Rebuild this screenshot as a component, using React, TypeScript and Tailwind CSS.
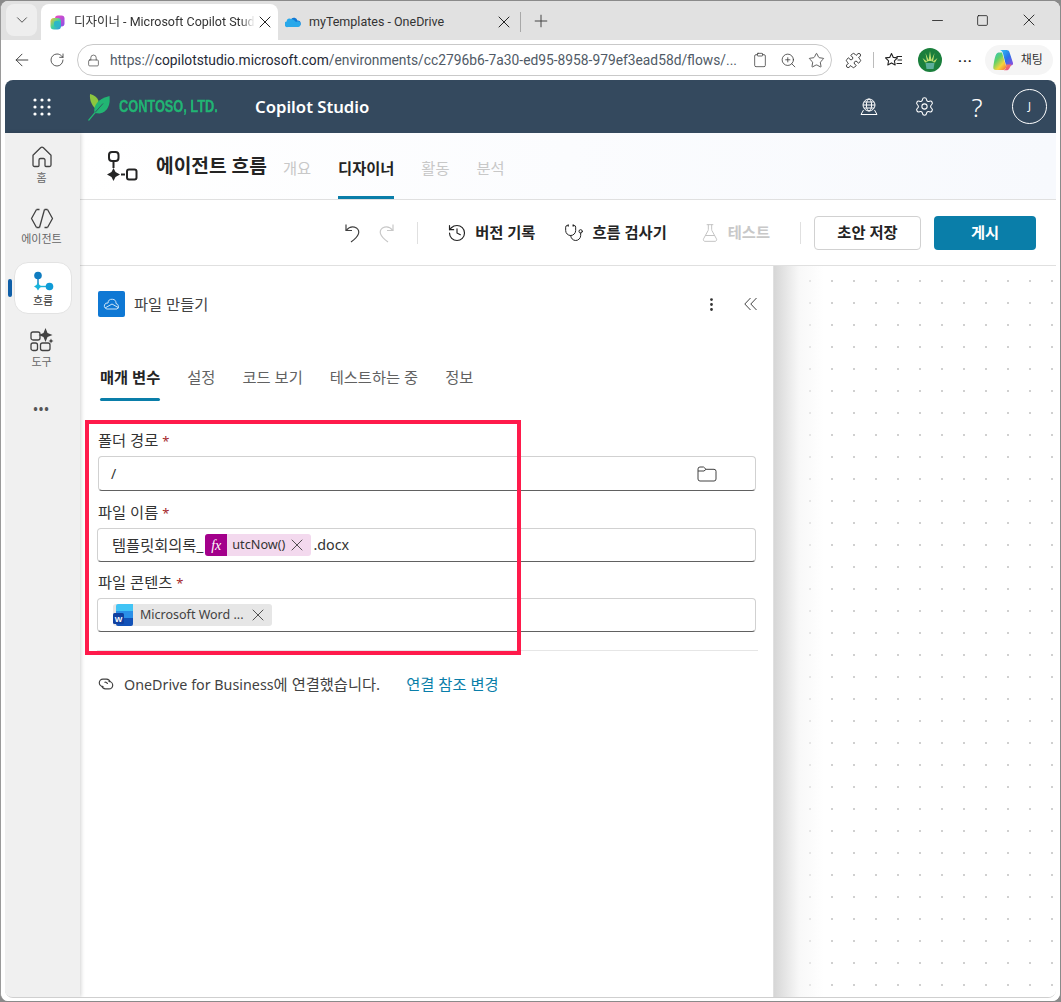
import { ArrowLeft, Clipboard, FlaskConical, History, Lock, MoreVertical, Puzzle, RotateCw, Settings, Star, Stethoscope, X, ZoomIn, ChevronDown, Minus, Plus, Square } from 'lucide-react';

const FONT = 'font-["Noto_Sans","Noto_Sans_CJK_KR",sans-serif]';
const CHROME_FONT = 'font-["Roboto","Noto_Sans_CJK_KR",sans-serif]';

// ---- small drawn icons ----

function CopilotStudioFavicon() {
  return (
    <svg width="15" height="15" viewBox="0 0 15 15">
      <defs>
        <linearGradient id="fvA" x1="0" y1="0" x2="1" y2="1">
          <stop offset="0" stopColor="#f04bc0" />
          <stop offset="1" stopColor="#8a50e8" />
        </linearGradient>
        <linearGradient id="fvB" x1="0" y1="0" x2="1" y2="1">
          <stop offset="0" stopColor="#f5c23a" />
          <stop offset="0.5" stopColor="#3fd2a0" />
          <stop offset="1" stopColor="#2f8fe8" />
        </linearGradient>
      </defs>
      <rect x="5" y="0.5" width="9.500" height="11" rx="3" fill="url(#fvA)" />
      <rect x="0.500" y="3" width="10.500" height="11.500" rx="3.500" fill="url(#fvB)" />
      <rect x="4" y="6" width="6" height="6" rx="2" fill="#2cb6c8" />
    </svg>
  );
}

function OneDriveIcon() {
  return (
    <svg width="16" height="12" viewBox="0 0 16 11">
      <path d="M6.2 2.4A3.6 3.6 0 0 1 12.4 4 3 3 0 0 1 13 10H4z" fill="#0f78d4" />
      <path d="M6.2 2.4A3 3 0 0 0 1.6 5 2.7 2.7 0 0 0 3 10.5h10a2.6 2.6 0 0 0 2.6-2.4C15.8 5.200 13 3.800 11 5.400 9.500 3.300 7.500 2.400 6.200 2.400z" fill="#28a8ea" />
    </svg>
  );
}

function Waffle() {
  return (
    <svg width="18" height="18" viewBox="0 0 18 18" fill="#fff">
      {[2, 9, 16].map((y) => [2, 9, 16].map((x) => <circle key={`${x}-${y}`} cx={x} cy={y} r="1.6" />))}
    </svg>
  );
}

function LeafLogo() {
  return (
    <svg width="23" height="28" viewBox="0 0 23 28">
      <path d="M8 16C3 12 1.500 6 2 1c4 1 7.500 3.500 8.500 7z" fill="#8cc63f" />
      <path d="M6.500 20C5 12 10 6 21.500 3c1 8-1.500 16-10 17.500z" fill="#22b573" />
      <path d="M0.500 27.500C5 22 10 16 15 10.500" stroke="#22b573" strokeWidth="1.200" fill="none" />
      <path d="M7 19.500 15 10.500" stroke="#34495e" strokeWidth="0.800" fill="none" />
    </svg>
  );
}

function CopilotIcon() {
  return (
    <svg width="22" height="22" viewBox="0 0 22 22">
      <defs>
        <linearGradient id="cpA" x1="0" y1="0" x2="1" y2="1">
          <stop offset="0" stopColor="#2fc6f0" />
          <stop offset="0.55" stopColor="#2a6fe8" />
          <stop offset="1" stopColor="#9a4be0" />
        </linearGradient>
        <linearGradient id="cpB" x1="0" y1="0" x2="0.800" y2="1">
          <stop offset="0" stopColor="#2fc4c8" />
          <stop offset="0.4" stopColor="#5fd06a" />
          <stop offset="0.75" stopColor="#f6d53a" />
          <stop offset="1" stopColor="#f6893a" />
        </linearGradient>
        <linearGradient id="cpC" x1="0" y1="0" x2="1" y2="1">
          <stop offset="0" stopColor="#f5875a" />
          <stop offset="1" stopColor="#e8458f" />
        </linearGradient>
      </defs>
      <path d="M8 1h6.500c1.500 0 2.500.8 3 2.300L21 14c.4 1.500-.7 2.500-2 2.500h-5L11 4.500C10.500 2.500 9.500 1.500 8 1z" fill="url(#cpA)" />
      <path d="M6.500 3.500h3.500L14 17c.5 2.300-1 4-3 4H4c-2 0-3-1.200-2.700-3C2 13 3 3.500 6.500 3.500z" fill="url(#cpB)" />
      <path d="M14 15.500h5.500L17 20c-.5 1-1.500 1.300-2.500 1.300H11c2.500 0 3.600-2.800 3-5.800z" fill="url(#cpC)" />
    </svg>
  );
}

function FlowIcon({ accent }: { accent?: boolean }) {
  if (accent) {
    return (
      <svg width="22" height="22" viewBox="0 0 22 22">
        <circle cx="6" cy="4.500" r="3.800" fill="#0f7cc0" />
        <path d="M6 8v6" stroke="#0f7cc0" strokeWidth="1.400" />
        <path d="M6 11.500l1.600 2.400 2.400 1.600-2.400 1.600L6 19.500l-1.600-2.400L2 15.500l2.400-1.600z" fill="#18b4dc" />
        <path d="M9 15.500h5" stroke="#18b4dc" strokeWidth="1.400" />
        <circle cx="17.500" cy="15.500" r="3.800" fill="#0f9bd7" />
      </svg>
    );
  }
  return (
    <svg width="32" height="31" viewBox="0 0 32 31" fill="none" stroke="#242424" strokeWidth="2">
      <rect x="3" y="1" width="9.500" height="9" rx="3" />
      <path d="M7.500 10v7" />
      <path d="M7.500 17l2 4 4.500 2.500-4.500 2.500-2 4-2-4L1 23.500 5.500 21z" fill="#242424" stroke="none" />
      <path d="M15 23.500h4" />
      <rect x="21" y="18.500" width="9.500" height="10" rx="2" />
    </svg>
  );
}

function HomeIcon() {
  return (
    <svg width="22" height="22" viewBox="0 0 22 22" fill="none" stroke="#424242" strokeWidth="1.300" strokeLinejoin="round">
      <path d="M2 9.200 9.600 1.800a2 2 0 0 1 2.800 0L20 9.200V19a1.500 1.500 0 0 1-1.500 1.500H15a1 1 0 0 1-1-1v-5.500a1.500 1.500 0 0 0-1.500-1.500h-3A1.500 1.500 0 0 0 8 14v5.500a1 1 0 0 1-1 1H3.500A1.500 1.500 0 0 1 2 19z" />
    </svg>
  );
}

function AgentIcon() {
  return (
    <svg width="24" height="21" viewBox="0 0 24 21" fill="none" stroke="#424242" strokeWidth="1.300" strokeLinejoin="round">
      <path d="M6.500 1.500 1.500 10.500l5 9" />
      <path d="M17.500 1.500l5 9-5 9" />
      <path d="M6.500 1.500h3M14.500 1.500h3M6.500 19.500h3M14.500 19.500h3" />
      <path d="M14.500 1.500 9.500 19.500" />
    </svg>
  );
}

function ToolsIcon() {
  return (
    <svg width="24" height="24" viewBox="0 0 24 24" fill="none" stroke="#424242" strokeWidth="1.300">
      <rect x="1" y="4" width="9" height="8" rx="2" />
      <rect x="1" y="15" width="6.500" height="7.500" rx="2" />
      <rect x="10.500" y="15" width="9.500" height="7.500" rx="2" />
      <path d="M15.500 0l2 5 5 2-5 2-2 5-2-5-5-2 5-2z" fill="#424242" stroke="none" />
      <path d="M21 10.500l.8 1.700 1.700.8-1.700.8-.8 1.700-.8-1.700-1.700-.8 1.700-.8z" fill="#424242" stroke="none" />
    </svg>
  );
}

function GlobeDesk() {
  return (
    <svg width="18" height="18" viewBox="0 0 18 18" fill="none" stroke="#fff" strokeWidth="1">
      <circle cx="9" cy="7" r="6" />
      <ellipse cx="9" cy="7" rx="2.600" ry="6" />
      <path d="M3 7h12M4 4h10M4 10h10" />
      <path d="M3.500 12 1 16.500h16L14.500 12" />
    </svg>
  );
}

function UndoIcon({ flip, color }: { flip?: boolean; color: string }) {
  return (
    <svg width="18" height="20" viewBox="0 0 18 20" fill="none" stroke={color} strokeWidth="1.200" className={flip ? '-scale-x-100' : ''}>
      <path d="M2 1.500v6h6" />
      <path d="M2 7.500 C5 4 9 3 12.500 5 c4 3 3 8-5.500 14" />
    </svg>
  );
}

function FavoritesIcon() {
  return (
    <svg width="18" height="16" viewBox="0 0 18 16" fill="none" stroke="#222" strokeWidth="1.100" strokeLinejoin="round">
      <path d="M6.500 1.500 8.300 5.400l4.200.5-3.100 2.900.8 4.200-3.700-2.100L2.800 13l.8-4.200L.5 5.900l4.200-.5z" />
      <path d="M11.500 4.500H17M12.500 8H17M11.500 11.500H17" />
    </svg>
  );
}

function FolderIcon() {
  return (
    <svg width="20" height="16" viewBox="0 0 20 16" fill="none" stroke="#424242" strokeWidth="1">
      <path d="M1 3a2 2 0 0 1 2-2h3.500L9 3.300h8a2 2 0 0 1 2 2V13a2 2 0 0 1-2 2H3a2 2 0 0 1-2-2z" />
      <path d="M1 5h6l2-1.700" />
    </svg>
  );
}

function ChevronsIcon() {
  return (
    <svg width="14" height="14" viewBox="0 0 14 14" fill="none" stroke="#424242" strokeWidth="1">
      <path d="M6.500 1 .8 7l5.700 6" />
      <path d="M12.500 1 6.800 7l5.700 6" />
    </svg>
  );
}

function OneDriveTile() {
  return (
    <div className="flex h-[26px] w-[27px] items-center justify-center rounded-[2px] bg-[#0f78d4]">
      <svg width="18" height="12" viewBox="0 0 18 12" fill="none" stroke="#cfe6f8" strokeWidth="1">
        <path d="M5 5a4 4 0 0 1 8 .5 3 3 0 0 1 1 5.500H4a3 3 0 0 1-2.500-4A3 3 0 0 1 5 5z" />
        <path d="M2 10 9 6l7 4" />
      </svg>
    </div>
  );
}

function WordIcon() {
  return (
    <svg width="20" height="22" viewBox="0 0 20 22">
      <path d="M3 2a2 2 0 0 1 2-2h15v7H3z" fill="#41c4f5" />
      <path d="M3 7h17v7H3z" fill="#2a8fe8" />
      <path d="M3 14h17v6a2 2 0 0 1-2 2H5a2 2 0 0 1-2-2z" fill="#1252b8" />
      <rect x="0" y="9" width="11" height="11" rx="1.500" fill="#1040a0" />
      <text x="5.500" y="17.500" fontSize="8" fontWeight="700" textAnchor="middle" fill="#fff" fontFamily="Liberation Sans">W</text>
    </svg>
  );
}

function LinkIcon() {
  return (
    <svg width="16" height="14" viewBox="0 0 16 14" fill="none" stroke="#424242" strokeWidth="1.200">
      <path d="M5.500 9.500H5a3.700 3.700 0 0 1 0-7.400h3.500a3.700 3.700 0 0 1 3.600 3" />
      <path d="M10.500 4.500h.5a3.700 3.700 0 0 1 0 7.400H7.500a3.700 3.700 0 0 1-3.600-3" />
      <path d="M6.500 5.500a2 2 0 0 1 3 1.500" />
    </svg>
  );
}

function ProfileAvatar() {
  return (
    <div className="flex h-[24px] w-[24px] items-center justify-center rounded-full bg-[#1a7f3c]">
      <svg width="18" height="20" viewBox="0 0 18 20">
        <path d="M9 1l1.500 10h-3zM4.500 3l3.500 8-2 .5zM13.500 3l-3.500 8 2 .5zM1.500 8l5 4-2.500.5zM16.500 8l-5 4 2.500.5z" fill="#bfe070" />
        <path d="M4.500 13h9l-1 6h-7z" fill="#5cae9a" />
      </svg>
    </div>
  );
}

// ---- browser chrome ----

function TabStrip() {
  return (
    <div className={`flex h-[39px] shrink-0 items-end bg-[#e1e1e1] pl-[5px] ${CHROME_FONT}`}>
      <div className="mb-[4px] flex h-[32px] w-[31px] items-center justify-center rounded-lg bg-[#eeeeee]">
        <ChevronDown size={18} strokeWidth={1.1} color="#333" />
      </div>
      <div className="ml-[4px] flex h-[36px] w-[237px] items-center rounded-t-lg bg-white pl-[9px]">
        <CopilotStudioFavicon />
        <span className="ml-[9px] w-[181px] overflow-hidden whitespace-nowrap text-[12.5px] text-[#333] [mask-image:linear-gradient(to_right,black_92%,transparent)]">디자이너 - Microsoft Copilot Studio</span>
        <X size={20} strokeWidth={1.2} color="#222" />
      </div>
      <div className="flex h-[36px] items-center pl-[7px]">
        <OneDriveIcon />
        <span className="ml-[8px] w-[185px] whitespace-nowrap text-[12.5px] text-[#333]">myTemplates - OneDrive</span>
        <X size={20} strokeWidth={1.2} color="#222" />
        <div className="ml-[6px] h-[20px] w-px bg-[#a8a8a8]" />
      </div>
      <div className="mb-[9px] ml-[10px]">
        <Plus size={20} strokeWidth={1.2} color="#444" />
      </div>
      <div className="mb-[10px] ml-auto flex items-center gap-[30px] pr-[21px]">
        <Minus size={17} strokeWidth={1.1} color="#111" />
        <Square size={13} strokeWidth={1.4} color="#111" />
        <X size={20} strokeWidth={1} color="#111" />
      </div>
    </div>
  );
}

function AddressRow() {
  return (
    <div className={`flex h-[40px] shrink-0 items-center bg-white pl-[11px] ${CHROME_FONT}`}>
      <ArrowLeft size={20} strokeWidth={1.1} color="#333" />
      <RotateCw size={16} strokeWidth={1.2} color="#333" className="ml-[17px]" />
      <div className="ml-[12px] flex h-[32px] w-[755px] items-center rounded-full border border-[#c9c9c9] pl-[9px]">
        <Lock size={13} strokeWidth={1.2} color="#333" />
        <span className="ml-[10px] w-[639px] overflow-hidden whitespace-nowrap text-[13.800px] text-[#505a66]">
          https://<span className="text-[#1f2937]">copilotstudio.microsoft.com</span>/environments/cc2796b6-7a30-ed95-8958-979ef3ead58d/flows/...
        </span>
        <Clipboard size={16} strokeWidth={1.1} color="#333" className="ml-[3px]" />
        <ZoomIn size={17} strokeWidth={1.1} color="#333" className="ml-[12px]" />
        <Star size={17} strokeWidth={1.1} color="#333" className="ml-[11px]" />
      </div>
      <Puzzle size={17} strokeWidth={1.2} color="#222" className="ml-[13px]" />
      <div className="ml-[11px] h-[16px] w-px bg-[#bbb]" />
      <div className="ml-[11px]">
        <FavoritesIcon />
      </div>
      <div className="ml-[15px]">
        <ProfileAvatar />
      </div>
      <span className="ml-[16px] text-[13px] font-bold leading-none tracking-[1px] text-[#222]">···</span>
      <div className="ml-[12px] flex h-[30px] w-[68px] items-center rounded-full bg-[#f5f5f5] pl-[7px]">
        <CopilotIcon />
        <span className="ml-[7px] text-[12px] text-[#333]">채팅</span>
      </div>
    </div>
  );
}

// ---- app ----

function AppHeader() {
  return (
    <div className="flex h-[53px] shrink-0 items-center bg-[#34495e] pl-[28px] pr-[9px] text-white">
      <Waffle />
      <div className="ml-[37px]">
        <LeafLogo />
      </div>
      <span className='ml-[8px] w-[133px] origin-left whitespace-nowrap font-["Liberation_Sans",sans-serif] text-[17px] font-bold text-[#22b573] [-webkit-text-stroke:0.4px_#22b573] [transform:scaleX(0.75)]'>CONTOSO, LTD.</span>
      <span className="ml-[3px] text-[16.700px] font-semibold">Copilot Studio</span>
      <div className="ml-auto flex items-center">
        <GlobeDesk />
        <Settings size={21} strokeWidth={1.2} className="ml-[36px]" />
        <span className="ml-[35px] w-[14px] text-center text-[26px] font-light leading-none">?</span>
        <div className="ml-[28px] flex h-[35px] w-[35px] items-center justify-center rounded-full border border-white text-[11px]">J</div>
      </div>
    </div>
  );
}

function NavItem({ icon, label, active }: { icon: React.ReactNode; label: string; active?: boolean }) {
  return (
    <div className={active ? 'relative mx-[9px] flex h-[52px] w-[58px] flex-col items-center rounded-[14px] border border-[#e3e3e3] bg-white pt-[8px]' : 'flex w-[73px] flex-col items-center'}>
      {active && <div className="absolute -left-[7px] top-[16px] h-[18px] w-[4px] rounded-full bg-[#0f5fa8]" />}
      {icon}
      <span className={active ? 'mt-[1px] text-[11px] leading-[13px] text-[#333]' : 'mt-[3px] text-[11px] leading-[13px] text-[#666]'}>{label}</span>
    </div>
  );
}

function Sidebar() {
  return (
    <div className="z-10 flex w-[75px] shrink-0 flex-col bg-[#f0f0f0] pt-[13px] shadow-[1px_0_4px_rgba(0,0,0,0.18)]">
      <NavItem icon={<HomeIcon />} label="홈" />
      <div className="mt-[24px]">
        <NavItem icon={<AgentIcon />} label="에이전트" />
      </div>
      <div className="mt-[17px]">
        <NavItem active icon={<FlowIcon accent />} label="흐름" />
      </div>
      <div className="mt-[14px]">
        <NavItem icon={<ToolsIcon />} label="도구" />
      </div>
      <div className="mt-[36px] w-[73px] text-center text-[12px] font-bold leading-none tracking-[1px] text-[#555]">•••</div>
    </div>
  );
}

function FlowHeader() {
  return (
    <div className="flex h-[67px] shrink-0 items-center border-b border-[#e0e0e0] bg-gradient-to-r from-white to-[#f7f9fd] pl-[26px]">
      <FlowIcon />
      <span className="ml-[18px] text-[19.200px] font-semibold text-[#242424]">에이전트 흐름</span>
      <div className="ml-[16px] flex self-stretch pt-[4px] text-[15.300px]">
        <span className="flex items-center text-[#c8c8c8]">개요</span>
        <span className="relative ml-[27px] flex items-center font-bold text-[#242424]">
          디자이너
          <span className="absolute inset-x-0 bottom-0 h-[3px] bg-[#0a7ea9]" />
        </span>
        <span className="ml-[27px] flex items-center text-[#c8c8c8]">활동</span>
        <span className="ml-[27px] flex items-center text-[#c8c8c8]">분석</span>
      </div>
    </div>
  );
}

function CommandBar() {
  return (
    <div className="flex h-[66px] shrink-0 items-center justify-end border-b border-[#e0e0e0] bg-white pr-[20px] text-[15.300px] font-semibold">
      <UndoIcon color="#424242" />
      <div className="ml-[15px]">
        <UndoIcon flip color="#c8c8c8" />
      </div>
      <div className="ml-[22px] h-[22px] w-px bg-[#e0e0e0]" />
      <History size={20} strokeWidth={1.4} color="#242424" className="ml-[29px]" />
      <span className="ml-[8px] text-[#242424]">버전 기록</span>
      <Stethoscope size={20} strokeWidth={1.2} color="#242424" className="ml-[29px]" />
      <span className="ml-[8px] text-[#242424]">흐름 검사기</span>
      <FlaskConical size={20} strokeWidth={1.2} color="#c4c4c4" className="ml-[33px]" />
      <span className="ml-[8px] text-[#c8c8c8]">테스트</span>
      <div className="ml-[30px] h-[22px] w-px bg-[#e0e0e0]" />
      <button className="ml-[13px] h-[34px] w-[107px] rounded-[4px] border border-[#d1d1d1] bg-white text-[#242424]">초안 저장</button>
      <button className="ml-[13px] h-[34px] w-[102px] rounded-[4px] bg-[#0a7ea9] text-white">게시</button>
    </div>
  );
}

function Label({ text }: { text: string }) {
  return (
    <div className="h-[20px] pl-[1px] text-[15.300px] leading-[20px] text-[#333]">
      {text} <span className="text-[13px] text-[#a4262c]">*</span>
    </div>
  );
}

function FieldBox({ children, className }: { children?: React.ReactNode; className?: string }) {
  return (
    <div className={`mt-[6px] flex items-center rounded-[4px] border border-[#d1d1d1] border-b-[#616161] ${className ?? ''}`}>
      {children}
    </div>
  );
}

function Panel() {
  return (
    <div className="flex w-[694px] shrink-0 flex-col border-r border-[#e0e0e0] bg-white px-[17px]">
      <div className="-mr-[2px] mt-[25px] flex items-center pl-[1px]">
        <OneDriveTile />
        <span className="ml-[9px] text-[15.300px] leading-[20px] text-[#424242]">파일 만들기</span>
        <MoreVertical size={17} strokeWidth={2} color="#333" className="ml-auto mr-[24px]" />
        <ChevronsIcon />
      </div>
      <div className="mt-[50px] flex gap-[27px] pl-[3px] text-[15.300px] leading-[20px] text-[#616161]">
        <span className="relative pb-[14px] font-semibold text-[#242424]">
          매개 변수
          <span className="absolute inset-x-0 bottom-0 h-[3px] rounded-full bg-[#0a7ea9]" />
        </span>
        <span>설정</span>
        <span>코드 보기</span>
        <span>테스트하는 중</span>
        <span>정보</span>
      </div>
      <div className="mt-[29px]">
        <Label text="폴더 경로" />
        <FieldBox className="ml-[1px] h-[35px] justify-between pl-[12px] pr-[38px]">
          <span className="text-[14px] text-[#333]">/</span>
          <FolderIcon />
        </FieldBox>
      </div>
      <div className="mt-[11px]">
        <Label text="파일 이름" />
        <FieldBox className="h-[34px] pl-[14px] text-[15.300px] text-[#333]">
          <span className="whitespace-nowrap">템플릿회의록_</span>
          <span className="ml-[2px] flex h-[22px] items-center rounded-[3px] bg-[#f3d9ee]">
            <span className='flex h-[22px] w-[22px] items-center justify-center rounded-l-[3px] bg-[#a3008b] font-["Liberation_Serif",serif] text-[14px] italic text-white'>fx</span>
            <span className="ml-[5px] text-[12.700px]">utcNow()</span>
            <X size={20} strokeWidth={1} color="#333" className="ml-[2px] mr-[4px]" />
          </span>
          <span className="ml-[2px] text-[14.300px]">.docx</span>
        </FieldBox>
      </div>
      <div className="mt-[10px]">
        <Label text="파일 콘텐츠" />
        <FieldBox className="h-[34px] pl-[15px]">
          <span className="flex h-[22px] items-center rounded-[3px] bg-[#e6e6e6] text-[12.500px] text-[#424242]">
            <WordIcon />
            <span className="ml-[7px] whitespace-nowrap">Microsoft Word ...</span>
            <X size={20} strokeWidth={1} color="#333" className="ml-[4px] mr-[4px]" />
          </span>
        </FieldBox>
      </div>
      <div className="-mr-[2px] mt-[18px] h-px bg-[#e6e6e6]" />
      <div className="mt-[23px] flex h-[20px] items-center pl-[1px] text-[14.300px] leading-[20px] text-[#424242]">
        <LinkIcon />
        <span className="ml-[10px] whitespace-nowrap">
          OneDrive for Business<span className="text-[15.300px]">에 연결했습니다.</span>
        </span>
        <span className="ml-[26px] text-[15.300px] text-[#0a7ea9]">연결 참조 변경</span>
      </div>
    </div>
  );
}

export default function App() {
  return (
    <div className={`relative flex h-[1002px] w-[1061px] flex-col overflow-hidden bg-[#8a8a8a] ${FONT}`}>
      <div className="mb-[1px] mr-[1px] mt-[1px] flex flex-1 flex-col overflow-hidden rounded-b-lg rounded-t-lg border-l border-[#9a9a9a] bg-white">
        <TabStrip />
        <AddressRow />
        <div className="flex min-h-0 flex-1 flex-col bg-white pb-[3px] pl-[4px] pr-[4px]">
          <div className="flex min-h-0 flex-1 flex-col overflow-hidden rounded-lg border-b border-[#cfcfcf]">
            <AppHeader />
            <div className="flex min-h-0 flex-1">
              <Sidebar />
              <div className="flex min-w-0 flex-1 flex-col">
                <FlowHeader />
                <CommandBar />
                <div className="flex min-h-0 flex-1">
                  <Panel />
                  <div className="relative flex-1 bg-white bg-[radial-gradient(circle,#d0d0d0_1px,transparent_1.200px)] bg-[size:22px_22px] bg-[position:3px_4px]">
                    <div className="absolute inset-y-0 left-0 w-[50px] bg-gradient-to-r from-[#d6d6d6] via-[#f8f8f8] to-transparent" />
                  </div>
                </div>
              </div>
            </div>
          </div>
        </div>
      </div>
      {/* annotation drawn over the screenshot */}
      <div className="pointer-events-none absolute left-[85px] top-[420px] h-[235px] w-[436px] border-[4px] border-[#ff1a4b]" />
    </div>
  );
}
